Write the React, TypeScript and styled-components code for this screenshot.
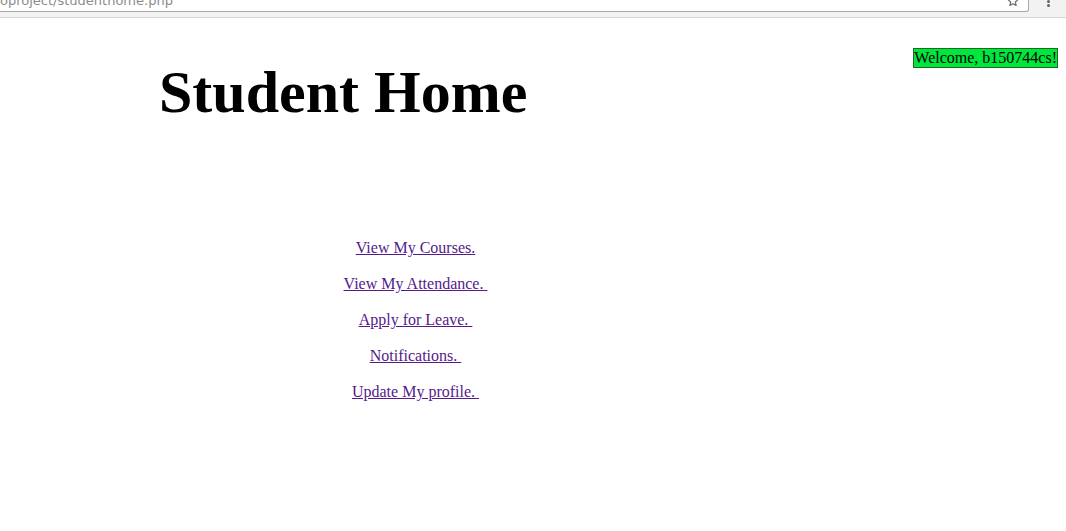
import React from "react";
import styled, { createGlobalStyle } from "styled-components";

const GlobalStyle = createGlobalStyle`
  html, body { margin: 0; padding: 0; background: #ffffff; }
  body { font-family: "Liberation Serif", "Times New Roman", serif; }
`;

const Chrome = styled.div`
  height: 17px;
  background: #f2f2f2;
  border-bottom: 1px solid #d6d6d6;
  display: flex;
  align-items: flex-start;
  overflow: hidden;
`;

const UrlBox = styled.div`
  flex: none;
  width: 1028px;
  height: 11px;
  background: #ffffff;
  border: 1px solid #a9a9a9;
  border-top: none;
  border-left: none;
  border-bottom-right-radius: 3px;
  display: flex;
  align-items: flex-start;
  justify-content: space-between;
  overflow: hidden;
  box-sizing: content-box;
`;

const UrlText = styled.span`
  font-family: "DejaVu Sans", sans-serif;
  font-size: 13px;
  line-height: 16px;
  color: #8c8c8c;
  margin-top: -7px;
  white-space: nowrap;
`;

const StarIcon = styled.svg`
  width: 14px;
  height: 14px;
  margin-top: -6px;
  margin-right: 8px;
  flex: none;
`;

const MenuDots = styled.div`
  flex: none;
  box-sizing: border-box;
  width: 37px;
  display: flex;
  flex-direction: column;
  align-items: center;
  gap: 1px;
  margin-top: -4px;
  padding-left: 2px;
`;

const Dot = styled.span`
  width: 3px;
  height: 3px;
  border-radius: 50%;
  background: #5f6368;
`;

const Page = styled.div`
  padding: 0 8px;
`;

const Header = styled.div`
  display: flex;
  justify-content: space-between;
  align-items: flex-start;
  padding-top: 30px;
`;

const Title = styled.h1`
  margin: 9px 0 0 151px;
  font-size: 60px;
  line-height: 70px;
  font-weight: bold;
  color: #000;
`;

const Welcome = styled.div`
  background: #00e63c;
  border: 1px solid #1f6a1f;
  font-size: 16px;
  line-height: 18px;
  color: #000;
`;

const Nav = styled.nav`
  width: 815px;
  margin-top: 111px;
  display: flex;
  flex-direction: column;
  align-items: center;
  gap: 16px;
`;

const NavLink = styled.a`
  font-size: 16px;
  line-height: 20px;
  color: #551a8b;
  text-decoration: underline;
  white-space: pre;
`;

const links = [
  "View My Courses.",
  "View My Attendance.\u00a0",
  "Apply for Leave.\u00a0",
  "Notifications.\u00a0",
  "Update My profile.\u00a0",
];

export default function App() {
  return (
    <>
      <GlobalStyle />
      <Chrome>
        <UrlBox>
          <UrlText>oproject/studenthome.php</UrlText>
          <StarIcon viewBox="0 0 24 24">
            <path
              d="M12 3.5l2.6 5.6 6.1.6-4.6 4.1 1.3 6-5.4-3.1-5.4 3.1 1.3-6-4.6-4.1 6.1-.6z"
              fill="none"
              stroke="#666"
              strokeWidth="2"
              strokeLinejoin="round"
            />
          </StarIcon>
        </UrlBox>
        <MenuDots>
          <Dot />
          <Dot />
          <Dot />
        </MenuDots>
      </Chrome>
      <Page>
        <Header>
          <Title>Student Home</Title>
          <Welcome>Welcome, b150744cs!</Welcome>
        </Header>
        <Nav>
          {links.map((l) => (
            <NavLink key={l} href="#">
              {l}
            </NavLink>
          ))}
        </Nav>
      </Page>
    </>
  );
}
